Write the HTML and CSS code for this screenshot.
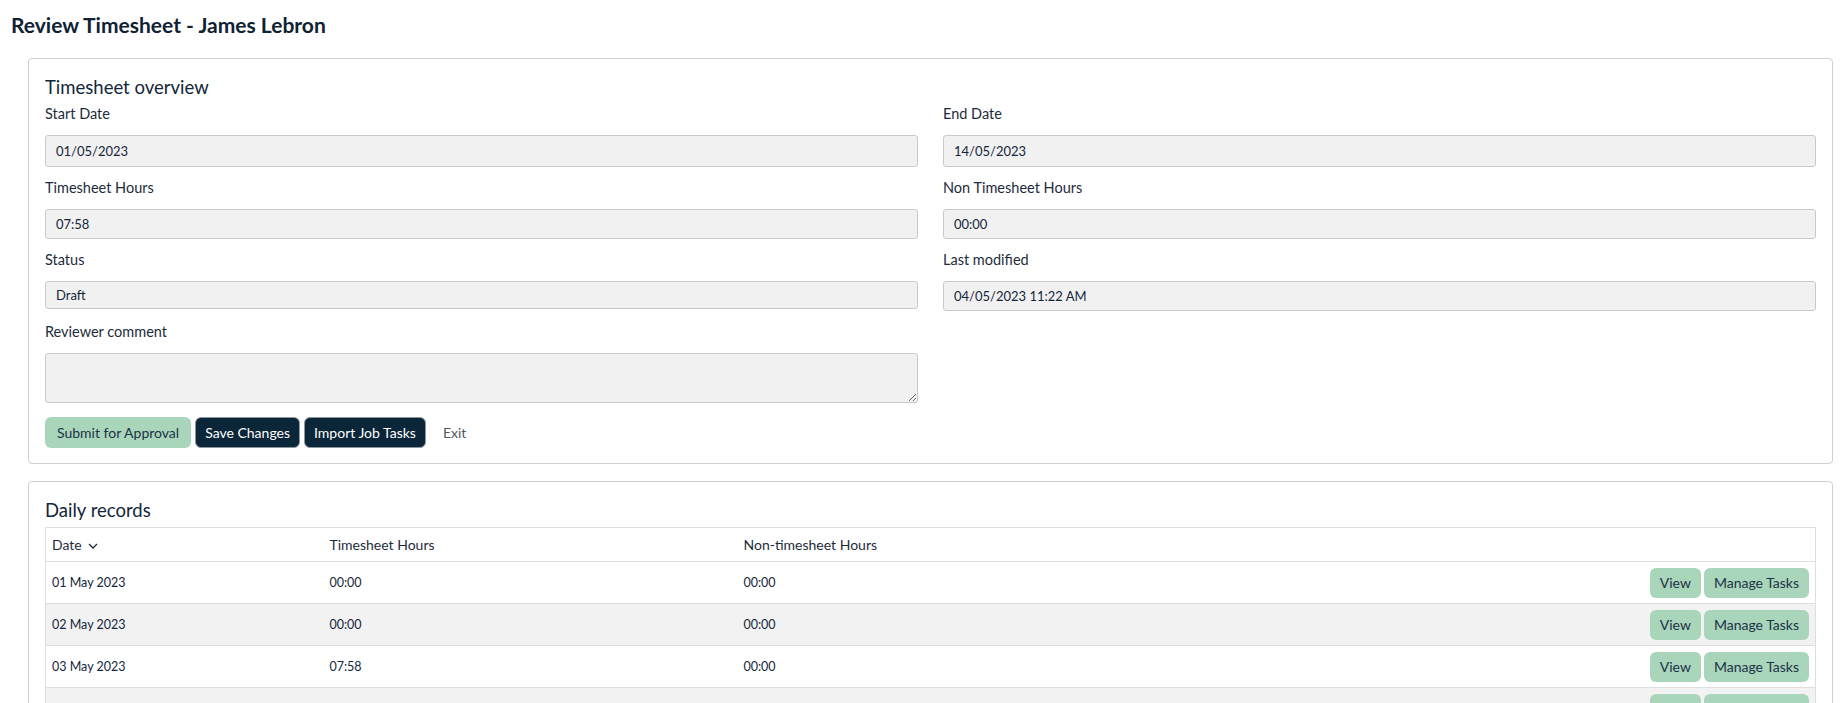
FILE: index.html
```html
<!DOCTYPE html>
<html lang="en">

<head>
    <meta charset="UTF-8">
    <meta name="viewport" content="width=device-width, initial-scale=1.0">
    <title>Review Timesheet</title>
    <link rel="stylesheet" href="styles.css">
</head>

<body>
    <h1 class="page-title">Review Timesheet - James Lebron</h1>

    <div class="page">
        <div class="card">
            <h2 class="card-title">Timesheet overview</h2>
            <div class="form-grid">
                <div class="field">
                    <label>Start Date</label>
                    <div class="input input-tall">01/05/2023</div>
                </div>
                <div class="field">
                    <label>End Date</label>
                    <div class="input input-tall">14/05/2023</div>
                </div>
                <div class="field">
                    <label>Timesheet Hours</label>
                    <div class="input">07:58</div>
                </div>
                <div class="field">
                    <label>Non Timesheet Hours</label>
                    <div class="input">00:00</div>
                </div>
                <div class="field">
                    <label>Status</label>
                    <div class="input input-short">Draft</div>
                </div>
                <div class="field">
                    <label>Last modified</label>
                    <div class="input">04/05/2023 11:22 AM</div>
                </div>
                <div class="field">
                    <label>Reviewer comment</label>
                    <textarea class="input textarea"></textarea>
                </div>
            </div>
            <div class="actions">
                <button class="btn btn-green">Submit for Approval</button>
                <button class="btn btn-dark">Save Changes</button>
                <button class="btn btn-dark">Import Job Tasks</button>
                <button class="btn btn-link">Exit</button>
            </div>
        </div>

        <div class="card">
            <h2 class="card-title">Daily records</h2>
            <table class="records">
                <thead>
                    <tr>
                        <th class="col-date">Date
                            <svg class="chevron" width="10" height="6" viewBox="0 0 10 6"><polyline points="1,1 5,5 9,1" fill="none" stroke="currentColor" stroke-width="1.3"/></svg>
                        </th>
                        <th class="col-hours">Timesheet Hours</th>
                        <th>Non-timesheet Hours</th>
                        <th></th>
                    </tr>
                </thead>
                <tbody id="recordRows"></tbody>
            </table>
        </div>
    </div>

    <script>
        const records = [
            ["01 May 2023", "00:00", "00:00"],
            ["02 May 2023", "00:00", "00:00"],
            ["03 May 2023", "07:58", "00:00"],
            ["04 May 2023", "00:00", "00:00"]
        ];

        const rows = document.getElementById("recordRows");
        records.forEach(r => {
            const tr = document.createElement("tr");
            tr.innerHTML = `<td>${r[0]}</td><td>${r[1]}</td><td>${r[2]}</td>
                <td class="row-actions"><button class="btn btn-green btn-sm">View</button><button class="btn btn-green btn-sm">Manage Tasks</button></td>`;
            rows.appendChild(tr);
        });
    </script>
</body>

</html>
```

FILE: styles.css
```css
* {
    box-sizing: border-box;
}

body {
    margin: 0;
    font-family: Lato, 'Liberation Sans', sans-serif;
    color: #13263a;
    background: #fff;
}

.page-title {
    margin: 0;
    padding: 13px 0 0 11px;
    font-size: 21px;
    line-height: 24px;
    font-weight: 700;
    color: #0e2234;
}

.page {
    padding: 21px 12px 0 28px;
}

.card {
    border: 1px solid #cfcfcf;
    border-radius: 4px;
    padding: 16px 16px 15px;
    margin-bottom: 17px;
}

.card-title {
    margin: 0 0 5px;
    font-size: 18.5px;
    line-height: 24px;
    font-weight: 400;
    color: #13263a;
}

.form-grid {
    display: grid;
    grid-template-columns: 1fr 1fr;
    column-gap: 25px;
}

.field label {
    display: block;
    font-size: 14.5px;
    line-height: 20px;
    margin-bottom: 11px;
    color: #1c2c3c;
}

.field {
    margin-bottom: 11px;
}

.input {
    display: flex;
    align-items: center;
    height: 30px;
    padding: 0 10px;
    background: #f1f1f1;
    border: 1px solid #c9c9c9;
    border-radius: 3px;
    font-size: 13px;
    color: #14263a;
}

.input-tall {
    height: 32px;
}

.input-short {
    height: 28px;
}

.textarea {
    display: block;
    width: 100%;
    height: 50px;
    resize: vertical;
    font-family: inherit;
}

.actions {
    display: flex;
    align-items: center;
    gap: 4px;
    margin-top: 3px;
}

.btn {
    font-family: inherit;
    font-size: 14px;
    height: 31px;
    padding: 0 11px;
    border-radius: 6px;
    border: 1px solid transparent;
    cursor: pointer;
}

.btn-green {
    background: #a9d5bb;
    color: #1a3345;
}

.btn-dark {
    background: #0b2539;
    border-color: #8c98a2;
    color: #fff;
    padding: 0 9px;
}

.btn-link {
    background: none;
    color: #4e5963;
    padding: 0 12px;
}

.records {
    width: 100%;
    border-collapse: collapse;
    border: 1px solid #dedede;
    font-size: 12.5px;
}

.records th {
    height: 34px;
    text-align: left;
    font-weight: 400;
    font-size: 14px;
    padding: 0 6px;
    color: #1c2c3c;
}

.records td {
    height: 42px;
    padding: 0 6px;
    border-top: 1px solid #dedede;
    color: #14263a;
}

.records tbody tr:nth-child(even) {
    background: #f2f2f2;
}

.col-date {
    width: 278px;
}

.col-hours {
    width: 414px;
}

.chevron {
    margin-left: 3px;
    vertical-align: middle;
}

.row-actions {
    text-align: right;
    white-space: nowrap;
}

.btn-sm {
    height: 30px;
    padding: 0 9px;
    margin-left: 3px;
}
```
